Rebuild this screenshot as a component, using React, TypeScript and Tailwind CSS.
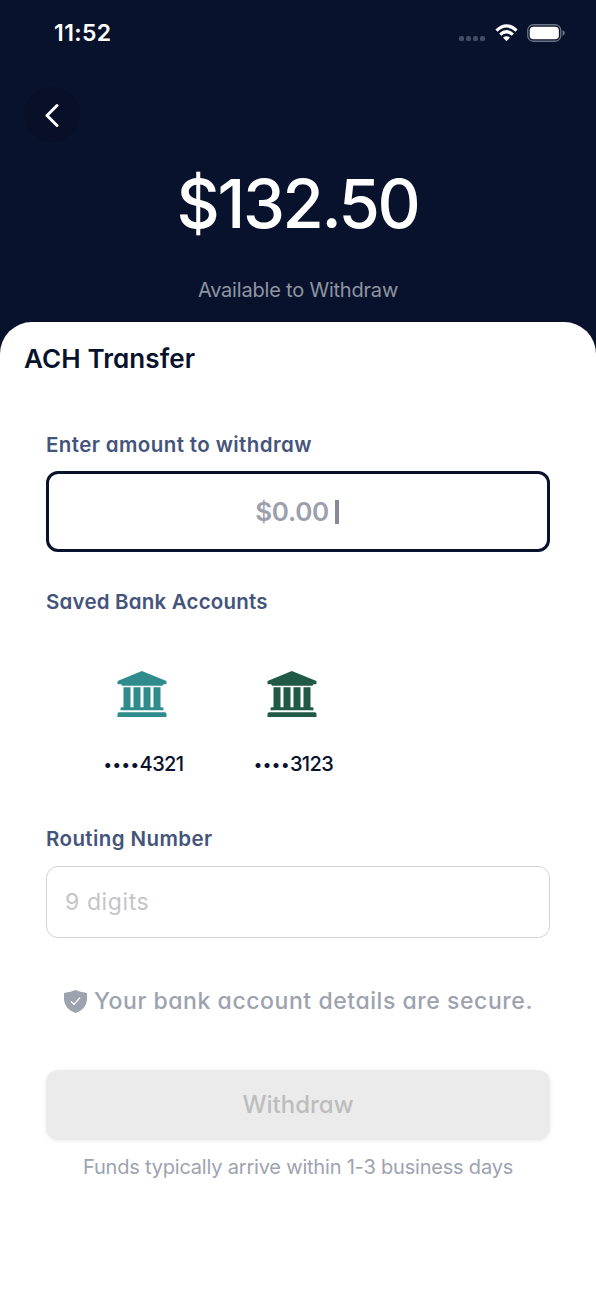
import React, { FC } from 'react';

type IBankAccount = {
  last4: string;
  color: string;
};

const accounts: IBankAccount[] = [
  { last4: '4321', color: 'text-[#2f8b8c]' },
  { last4: '3123', color: 'text-[#205a46]' },
];

const geometric = `[font-feature-settings:'cv11']`;

const BankIcon: FC<{ className?: string }> = ({ className }) => (
  <svg className={className} viewBox="0 0 147 138" fill="currentColor">
    <path d="M73 0 145 29Q147 30 147 32V38Q147 40 144 40H137V41Q137 44 133 44H15Q12 44 12 41V40H3Q0 40 0 38V32Q0 30 2 29Z" />
    <path d="M18 49H39V109H48V49H69V109H78V49H99V109H108V49H129V109H134Q138 109 138 113V118H9V113Q9 109 13 109H18Z" />
    <path d="M5 124H142Q147 124 147 129V138H0V129Q0 124 5 124Z" />
  </svg>
);

const ShieldIcon: FC = () => (
  <svg className="h-[23px] w-[23px] shrink-0" viewBox="0 0 69 69">
    <path
      d="M34.500 0Q49 7 66 8Q69 8 69 11V29Q67 57 34.500 69Q2 57 0 29V11Q0 8 3 8Q20 7 34.500 0Z"
      fill="#9ca3af"
    />
    <path d="m22 35 8 8 17-19" fill="none" stroke="#fff" strokeWidth="4" strokeLinecap="round" strokeLinejoin="round" />
  </svg>
);

const StatusBar: FC = () => (
  <div className="flex h-[66px] items-center justify-between pl-[54px] pr-[30px]">
    <span className="text-[23px] font-semibold leading-none tracking-[0.4px]">11:52</span>
    <div className="flex items-center">
      <div className="mt-[11px] flex gap-[2px]">
        <i className="size-[5px] rounded-[1.5px] bg-[#414a61]" />
        <i className="size-[5px] rounded-[1.5px] bg-[#414a61]" />
        <i className="size-[5px] rounded-[1.5px] bg-[#414a61]" />
        <i className="size-[5px] rounded-[1.5px] bg-[#414a61]" />
      </div>
      <svg className="ml-[10px] h-[18px] w-[23px]" viewBox="0 0 23 18" fill="none" stroke="#fff" strokeWidth="3.2">
        <path d="M1.500 6.600Q11.500-2.800 21.500 6.600" />
        <path d="M5.200 10.700Q11.500 4.800 17.800 10.700" />
        <path d="M8 13.600Q11.500 10.700 15 13.600L11.500 17.300Z" fill="#fff" stroke="none" />
      </svg>
      <svg className="ml-[9px] h-[18px] w-[39px]" viewBox="0 0 39 18">
        <rect x=".75" y=".75" width="33" height="16.500" rx="5.500" fill="none" stroke="#6b7386" strokeWidth="1.300" />
        <rect x="2.700" y="2.700" width="29.200" height="12.600" rx="3.800" fill="#fff" />
        <path d="M35.500 6Q37.800 7 37.800 9T35.500 12Z" fill="#6b7386" />
      </svg>
    </div>
  </div>
);

const App: FC = () => {
  return (
    <div className="flex h-[1290px] w-[596px] flex-col overflow-hidden bg-[#08122c] font-[Inter,sans-serif]">
      <header className="h-[322px] shrink-0 text-white">
        <StatusBar />
        <button className="ml-6 mt-[21px] flex size-14 items-center justify-center rounded-full bg-[#071028]">
          <svg className="h-6 w-4" viewBox="0 0 16 24" fill="none" stroke="#fff" strokeWidth="3">
            <path d="M13 2.500 3 12.500 13 22.500" strokeLinecap="round" strokeLinejoin="round" />
          </svg>
        </button>
        <div className="mt-[21px] pr-[1px] text-center text-[67px] font-medium leading-[80px] tracking-[-2.4px]">
          $132.50
        </div>
        <p className="mt-[36px] text-center text-[20px] leading-[20px] tracking-[-0.2px] text-[#8f95a3]">
          Available to Withdraw
        </p>
      </header>

      <main className="flex-1 rounded-t-[32px] bg-white">
        <h1
          className={`pl-6 pt-[21px] text-[26px] font-semibold leading-8 tracking-[0.1px] text-[#08122c] ${geometric}`}
        >
          ACH Transfer
        </h1>

        <div className="px-[46px]">
          <h2
            className={`mt-[58px] text-[20.5px] font-semibold leading-6 tracking-[0.4px] text-[#44547b] ${geometric}`}
          >
            Enter amount to withdraw
          </h2>
          <div className="mt-[14px] flex h-[81px] items-center justify-center rounded-[12px] border-[3px] border-[#08122c] pr-[2px]">
            <span className="text-[26px] font-semibold leading-8 tracking-[-0.3px] text-[#9ca0ad]">$0.00</span>
            <i className="ml-[6px] h-6 w-[4px] bg-[#858a99]" />
          </div>

          <h2
            className={`mt-[38px] text-[20.5px] font-semibold leading-6 tracking-[0.2px] text-[#44547b] ${geometric}`}
          >
            Saved Bank Accounts
          </h2>
          <div className="mt-[57px] flex gap-[50px] pl-[46px]">
            {accounts.map((account) => (
              <div key={account.last4} className="flex w-[100px] flex-col items-center">
                <BankIcon className={`h-[46px] w-[50px] ${account.color}`} />
                <div className="mt-[35px] flex items-center pl-[3px] text-[20px] font-medium leading-6 text-[#08122c]">
                  <span className="text-[16px] tracking-[0.5px]">••••</span>
                  <span className="tracking-[-0.6px]">{account.last4}</span>
                </div>
              </div>
            ))}
          </div>

          <h2
            className={`mt-[51px] text-[20.5px] font-semibold leading-6 tracking-[0.4px] text-[#44547b] ${geometric}`}
          >
            Routing Number
          </h2>
          <div
            className={`mt-[15px] flex h-[72px] items-center rounded-[12px] border border-[#d2d4d9] pl-[18px] text-[23px] tracking-[0.6px] text-[#c4c4c7] ${geometric}`}
          >
            9 digits
          </div>

          <div className="mt-[47px] flex h-8 items-center gap-[7px] pl-[18px]">
            <ShieldIcon />
            <span
              className={`whitespace-nowrap text-[23px] font-medium leading-8 tracking-[0.56px] text-[#9ca3af] ${geometric}`}
            >
              Your bank account details are secure.
            </span>
          </div>

          <button
            className={`mt-[53px] flex h-[70px] w-full items-center justify-center rounded-[12px] bg-[#ebebeb] text-[24px] font-medium text-[#bdbdbd] shadow-[0_1px_4px_rgba(0,0,0,0.08)] ${geometric}`}
          >
            Withdraw
          </button>
          <p className="mt-[15px] whitespace-nowrap text-center text-[20px] leading-6 tracking-[-0.2px] text-[#9ca3af]">
            Funds typically arrive within 1-3 business days
          </p>
        </div>
      </main>
    </div>
  );
};

export default App;
